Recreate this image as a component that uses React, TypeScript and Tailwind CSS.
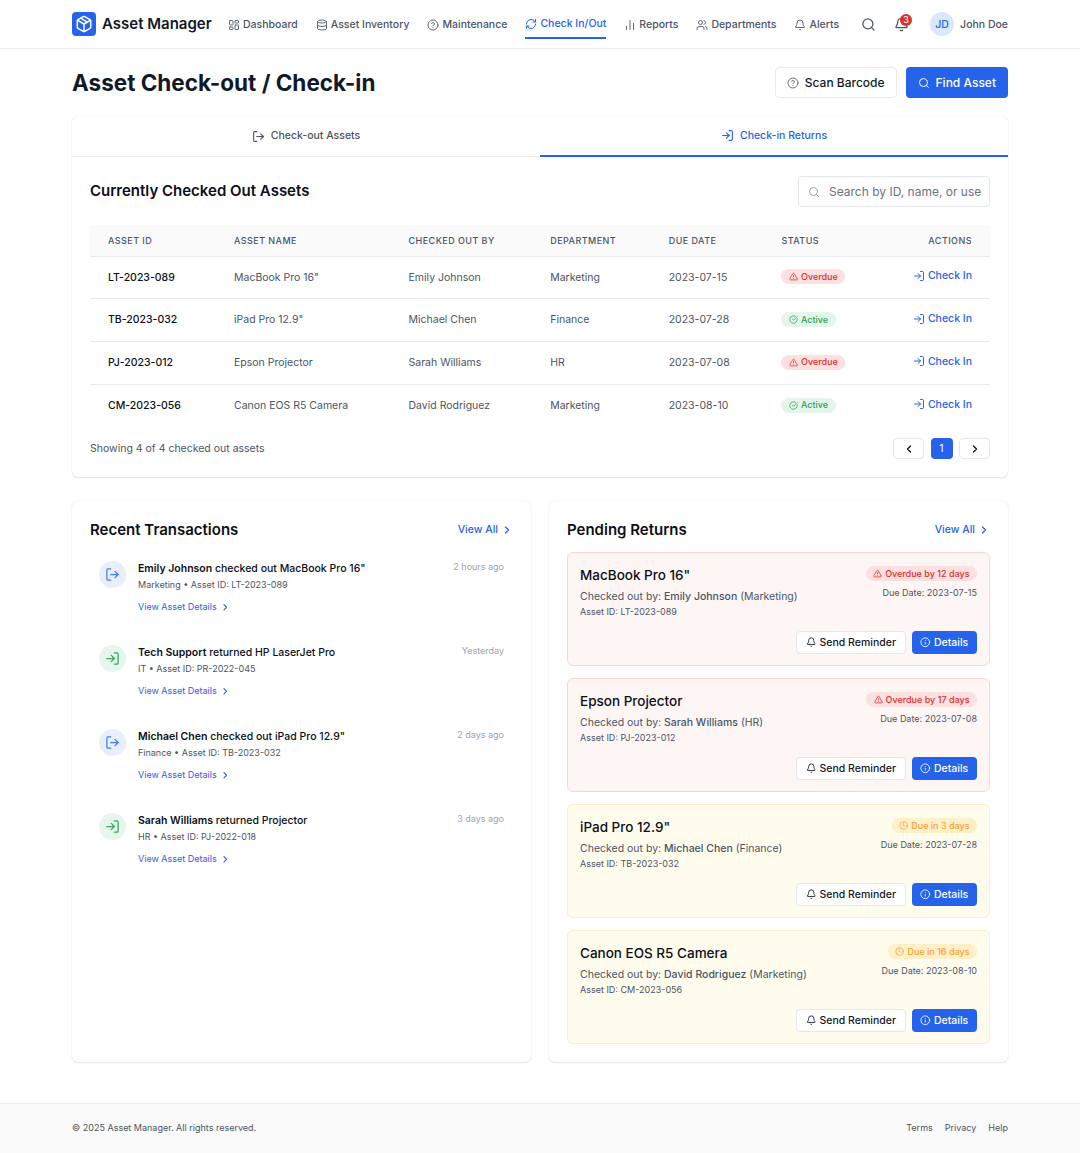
import clsx from "clsx"
import {
  Bell,
  ChartNoAxesColumn,
  ChevronLeft,
  ChevronRight,
  CircleCheckBig,
  CircleHelp,
  Clock,
  Database,
  Info,
  LayoutDashboard,
  LogIn,
  LogOut,
  Package,
  RefreshCw,
  Search,
  TriangleAlert,
  Users,
} from "lucide-react"

const navItems = [
  { label: "Dashboard", icon: LayoutDashboard },
  { label: "Asset Inventory", icon: Database },
  { label: "Maintenance", icon: CircleHelp },
  { label: "Check In/Out", icon: RefreshCw, active: true },
  { label: "Reports", icon: ChartNoAxesColumn },
  { label: "Departments", icon: Users },
  { label: "Alerts", icon: Bell },
]

const assets = [
  {
    id: "LT-2023-089",
    name: 'MacBook Pro 16"',
    user: "Emily Johnson",
    department: "Marketing",
    due: "2023-07-15",
    overdue: true,
  },
  {
    id: "TB-2023-032",
    name: 'iPad Pro 12.9"',
    user: "Michael Chen",
    department: "Finance",
    due: "2023-07-28",
    overdue: false,
  },
  {
    id: "PJ-2023-012",
    name: "Epson Projector",
    user: "Sarah Williams",
    department: "HR",
    due: "2023-07-08",
    overdue: true,
  },
  {
    id: "CM-2023-056",
    name: "Canon EOS R5 Camera",
    user: "David Rodriguez",
    department: "Marketing",
    due: "2023-08-10",
    overdue: false,
  },
]

const transactions = [
  {
    who: "Emily Johnson",
    action: 'checked out MacBook Pro 16"',
    meta: "Marketing • Asset ID: LT-2023-089",
    time: "2 hours ago",
    out: true,
  },
  {
    who: "Tech Support",
    action: "returned HP LaserJet Pro",
    meta: "IT • Asset ID: PR-2022-045",
    time: "Yesterday",
    out: false,
  },
  {
    who: "Michael Chen",
    action: 'checked out iPad Pro 12.9"',
    meta: "Finance • Asset ID: TB-2023-032",
    time: "2 days ago",
    out: true,
  },
  {
    who: "Sarah Williams",
    action: "returned Projector",
    meta: "HR • Asset ID: PJ-2022-018",
    time: "3 days ago",
    out: false,
  },
]

const pending = [
  {
    name: 'MacBook Pro 16"',
    user: "Emily Johnson",
    department: "Marketing",
    id: "LT-2023-089",
    badge: "Overdue by 12 days",
    due: "2023-07-15",
    overdue: true,
  },
  {
    name: "Epson Projector",
    user: "Sarah Williams",
    department: "HR",
    id: "PJ-2023-012",
    badge: "Overdue by 17 days",
    due: "2023-07-08",
    overdue: true,
  },
  {
    name: 'iPad Pro 12.9"',
    user: "Michael Chen",
    department: "Finance",
    id: "TB-2023-032",
    badge: "Due in 3 days",
    due: "2023-07-28",
    overdue: false,
  },
  {
    name: "Canon EOS R5 Camera",
    user: "David Rodriguez",
    department: "Marketing",
    id: "CM-2023-056",
    badge: "Due in 16 days",
    due: "2023-08-10",
    overdue: false,
  },
]

const columns = [
  { label: "Asset ID", width: "w-[126px]" },
  { label: "Asset Name", width: "w-[174.5px]" },
  { label: "Checked Out By", width: "w-[141.7px]" },
  { label: "Department", width: "w-[118.5px]" },
  { label: "Due Date", width: "w-[112.8px]" },
  { label: "Status", width: "w-[108px]" },
]

const cardClass =
  "rounded-md bg-white shadow-[0_0_1px_rgba(0,0,0,0.14),0_1px_2px_rgba(0,0,0,0.1)]"

const Header = () => (
  <header className="h-[49px] border-[#e9eaec] border-b">
    <div className="mx-auto flex h-12 w-[936px] items-center">
      <div className="flex w-[156px] shrink-0 items-center gap-1.5">
        <div className="flex size-6 items-center justify-center rounded-[4px] bg-[#2563eb] text-white">
          <Package className="size-[18px]" />
        </div>
        <span className="whitespace-nowrap pt-px font-semibold text-[#111827] text-[15px]">
          Asset Manager
        </span>
      </div>
      <nav className="flex items-center gap-[18px]">
        {navItems.map(({ label, icon: Icon, active }) => (
          <a
            className={clsx(
              "flex h-[29px] items-center gap-[3px] whitespace-nowrap pt-0.5 font-medium text-[10.5px]",
              active
                ? "border-[#2563eb] border-b-2 text-[#2563eb]"
                : "text-[#4b5563]"
            )}
            href="#"
            key={label}
          >
            <Icon
              className={clsx("-mt-px size-3", !active && "text-[#5f6774]")}
            />
            {label}
          </a>
        ))}
      </nav>
      <div className="ml-auto flex items-center text-[#4b5563]">
        <Search className="mr-[18px] size-[15px]" />
        <div className="relative mr-[21px]">
          <Bell className="size-[15px]" />
          <span className="absolute -top-[3px] -right-[3px] flex size-3 items-center justify-center rounded-full bg-[#dc2f2b] font-medium text-[9px] text-white">
            3
          </span>
        </div>
        <div className="mr-1.5 flex size-6 items-center justify-center rounded-full bg-[#dbe7fc] pt-px font-medium text-[#2563eb] text-[10.5px]">
          JD
        </div>
        <span className="pt-px font-medium text-[10.5px]">John Doe</span>
      </div>
    </div>
  </header>
)

const StatusBadge = ({ overdue }: { overdue: boolean }) => (
  <span
    className={clsx(
      "inline-flex h-[15px] items-center gap-[3px] rounded-full px-[7.5px] font-medium text-[9px]",
      overdue ? "bg-[#fde1e0] text-[#dc2f2b]" : "bg-[#e4f6ea] text-[#2f9e55]"
    )}
  >
    {overdue ? (
      <TriangleAlert className="size-[9px]" />
    ) : (
      <CircleCheckBig className="size-[9px]" />
    )}
    {overdue ? "Overdue" : "Active"}
  </span>
)

const CheckedOut = () => (
  <section className={clsx("mt-[17px] h-[361px]", cardClass)}>
    <div className="flex h-[41px] font-medium text-[10.5px]">
      <div className="flex flex-1 items-center justify-center gap-1.5 border-[#ebecee] border-b text-[#4b5563]">
        <LogOut className="size-[13px]" />
        Check-out Assets
      </div>
      <div className="flex flex-1 items-center justify-center gap-1.5 border-[#2563eb] border-b-2 text-[#2563eb]">
        <LogIn className="size-[13px]" />
        Check-in Returns
      </div>
    </div>
    <div className="px-[18px] pt-[19px]">
      <div className="flex h-[31px] items-center justify-between">
        <h2 className="font-semibold text-[15px]">
          Currently Checked Out Assets
        </h2>
        <label className="flex h-[31px] w-48 items-center rounded-[4px] border border-[#e5e7eb] pr-2 pl-[9px]">
          <Search className="mr-[9px] size-3 shrink-0 text-[#9ca3af]" />
          <input
            className="w-full min-w-0 text-[12px] outline-none placeholder:text-[#6b7280]"
            placeholder="Search by ID, name, or use"
          />
        </label>
      </div>
      <table className="mt-[18px] w-full table-fixed border-collapse text-left text-[#4b5563] text-[10.5px]">
        <thead>
          <tr className="h-[31px] border-[#e9eaec] border-b bg-[#fafafa] text-[9px] uppercase tracking-[0.45px]">
            {columns.map((c) => (
              <th className={clsx("pl-[18px] font-medium", c.width)} key={c.label}>
                {c.label}
              </th>
            ))}
            <th className="pr-[18px] text-right font-medium">Actions</th>
          </tr>
        </thead>
        <tbody>
          {assets.map((a) => (
            <tr
              className="h-[42.75px] border-[#e9eaec] border-b last:border-b-0"
              key={a.id}
            >
              <td className="pl-[18px] font-medium text-[#0b0f19]">{a.id}</td>
              <td className="pl-[18px]">{a.name}</td>
              <td className="pl-[18px]">{a.user}</td>
              <td className="pl-[18px]">{a.department}</td>
              <td className="pl-[18px]">{a.due}</td>
              <td className="pl-[18px]">
                <StatusBadge overdue={a.overdue} />
              </td>
              <td className="pr-[18px] text-right">
                <button
                  className="inline-flex items-center gap-[3px] font-medium text-[#2563eb]"
                  type="button"
                >
                  <LogIn className="size-3" />
                  Check In
                </button>
              </td>
            </tr>
          ))}
        </tbody>
      </table>
      <div className="mt-[11px] flex items-center justify-between text-[#4b5563] text-[10.5px]">
        <span>Showing 4 of 4 checked out assets</span>
        <div className="flex h-[21px] gap-[6.5px] text-[#0b0f19]">
          <button
            className="flex w-[31px] items-center justify-center rounded-[4px] border border-[#e5e7eb]"
            type="button"
          >
            <ChevronLeft className="size-3" strokeWidth={2.5} />
          </button>
          <button
            className="flex w-[22px] items-center justify-center rounded-[4px] bg-[#2563eb] text-white"
            type="button"
          >
            1
          </button>
          <button
            className="flex w-[31px] items-center justify-center rounded-[4px] border border-[#e5e7eb]"
            type="button"
          >
            <ChevronRight className="size-3" strokeWidth={2.5} />
          </button>
        </div>
      </div>
    </div>
  </section>
)

const PanelHeading = ({ title }: { title: string }) => (
  <div className="flex h-[22px] items-center justify-between">
    <h2 className="font-semibold text-[15px]">{title}</h2>
    <a
      className="flex items-center gap-[3px] font-medium text-[#2563eb] text-[10.5px]"
      href="#"
    >
      View All
      <ChevronRight className="size-3" strokeWidth={2.5} />
    </a>
  </div>
)

const RecentTransactions = () => (
  <section className={clsx("h-[561px] flex-1 px-[18px] pt-[18px]", cardClass)}>
    <PanelHeading title="Recent Transactions" />
    <ul className="mt-[11px] px-[9px]">
      {transactions.map((t) => (
        <li className="flex h-[84px] pt-[9px]" key={t.meta}>
          <div
            className={clsx(
              "mr-3 flex size-[27px] items-center justify-center rounded-full",
              t.out
                ? "bg-[#e8eefa] text-[#3f7df3]"
                : "bg-[#e6f6ec] text-[#35a65b]"
            )}
          >
            {t.out ? (
              <LogOut className="size-[15px]" />
            ) : (
              <LogIn className="size-[15px]" />
            )}
          </div>
          <div className="flex-1">
            <p className="font-medium text-[#0b0f19] text-[10.5px] leading-[15px]">
              <span className="font-semibold">{t.who}</span> {t.action}
            </p>
            <p className="mt-[3px] text-[#4b5563] text-[9px] leading-3">
              {t.meta}
            </p>
            <a
              className="mt-2.5 flex items-center gap-[3px] text-[#2563eb] text-[9px] leading-3"
              href="#"
            >
              View Asset Details
              <ChevronRight className="size-[10.5px]" strokeWidth={2.5} />
            </a>
          </div>
          <span className="text-[#9ca3af] text-[9px] leading-3">{t.time}</span>
        </li>
      ))}
    </ul>
  </section>
)

const PendingReturns = () => (
  <section className={clsx("h-[561px] flex-1 px-[18px] pt-[18px]", cardClass)}>
    <PanelHeading title="Pending Returns" />
    <div className="mt-[11px] space-y-3">
      {pending.map((p) => (
        <article
          className={clsx(
            "h-[114px] rounded-md border px-3 pt-[11px]",
            p.overdue
              ? "border-[#fbd5d4] bg-[#fef6f5]"
              : "border-[#fdeecb] bg-[#fffcee]"
          )}
          key={p.id}
        >
          <div className="flex h-[67px] justify-between">
            <div>
              <h3 className="font-medium text-[13.5px] leading-[22px]">
                {p.name}
              </h3>
              <p className="mt-[3px] text-[#4b5563] text-[10.5px] leading-[15px]">
                Checked out by: <span className="font-medium">{p.user}</span> (
                {p.department})
              </p>
              <p className="mt-0.5 text-[#4b5563] text-[9px] leading-3">
                Asset ID: {p.id}
              </p>
            </div>
            <div className="flex flex-col items-end pt-0.5">
              <span
                className={clsx(
                  "flex h-[15px] items-center gap-[3px] rounded-full px-[7.5px] font-medium text-[9px]",
                  p.overdue
                    ? "bg-[#fde1e0] text-[#dc2f2b]"
                    : "bg-[#fef0c7] text-[#fb9f3c]"
                )}
              >
                {p.overdue ? (
                  <TriangleAlert className="size-[9px]" />
                ) : (
                  <Clock className="size-[9px]" />
                )}
                {p.badge}
              </span>
              <span className="mt-1.5 text-[#4b5563] text-[9px] leading-3">
                Due Date: {p.due}
              </span>
            </div>
          </div>
          <div className="flex h-[23px] justify-end gap-1.5 font-medium text-[10.5px]">
            <button
              className="flex items-center gap-[3px] rounded-[4px] border border-[#e5e7eb] bg-white px-[8.75px] text-[#111827]"
              type="button"
            >
              <Bell className="size-[10.5px]" />
              Send Reminder
            </button>
            <button
              className="flex items-center gap-[3px] rounded-[4px] bg-[#2563eb] px-[8.75px] text-white"
              type="button"
            >
              <Info className="size-[10.5px]" />
              Details
            </button>
          </div>
        </article>
      ))}
    </div>
  </section>
)

export default function App() {
  return (
    <div className="flex h-[1153px] flex-col bg-white font-[Inter,sans-serif] text-[#0b0f19] antialiased">
      <Header />
      <main className="mx-auto w-[936px] flex-1 pt-[18px]">
        <div className="flex h-8 items-center justify-between">
          <h1 className="font-bold text-[#111827] text-[22.5px]">
            Asset Check-out / Check-in
          </h1>
          <div className="flex h-[31px] gap-[9px] self-start font-medium text-[12px]">
            <button
              className="flex items-center gap-1.5 rounded-[4px] border border-[#e9eaec] px-[11px] text-[#111827]"
              type="button"
            >
              <CircleHelp className="size-3 text-[#6b7280]" />
              Scan Barcode
            </button>
            <button
              className="flex items-center gap-1.5 rounded-[4px] bg-[#2563eb] px-3 text-white"
              type="button"
            >
              <Search className="size-3" />
              Find Asset
            </button>
          </div>
        </div>
        <CheckedOut />
        <div className="mt-6 flex gap-[18px]">
          <RecentTransactions />
          <PendingReturns />
        </div>
      </main>
      <footer className="h-[50px] border-[#ededee] border-t bg-[#fafafa]">
        <div className="mx-auto flex h-[48px] w-[936px] items-center justify-between text-[#4b5563] text-[9px]">
          <span>© 2025 Asset Manager. All rights reserved.</span>
          <div className="flex gap-3">
            <a href="#">Terms</a>
            <a href="#">Privacy</a>
            <a href="#">Help</a>
          </div>
        </div>
      </footer>
    </div>
  )
}
